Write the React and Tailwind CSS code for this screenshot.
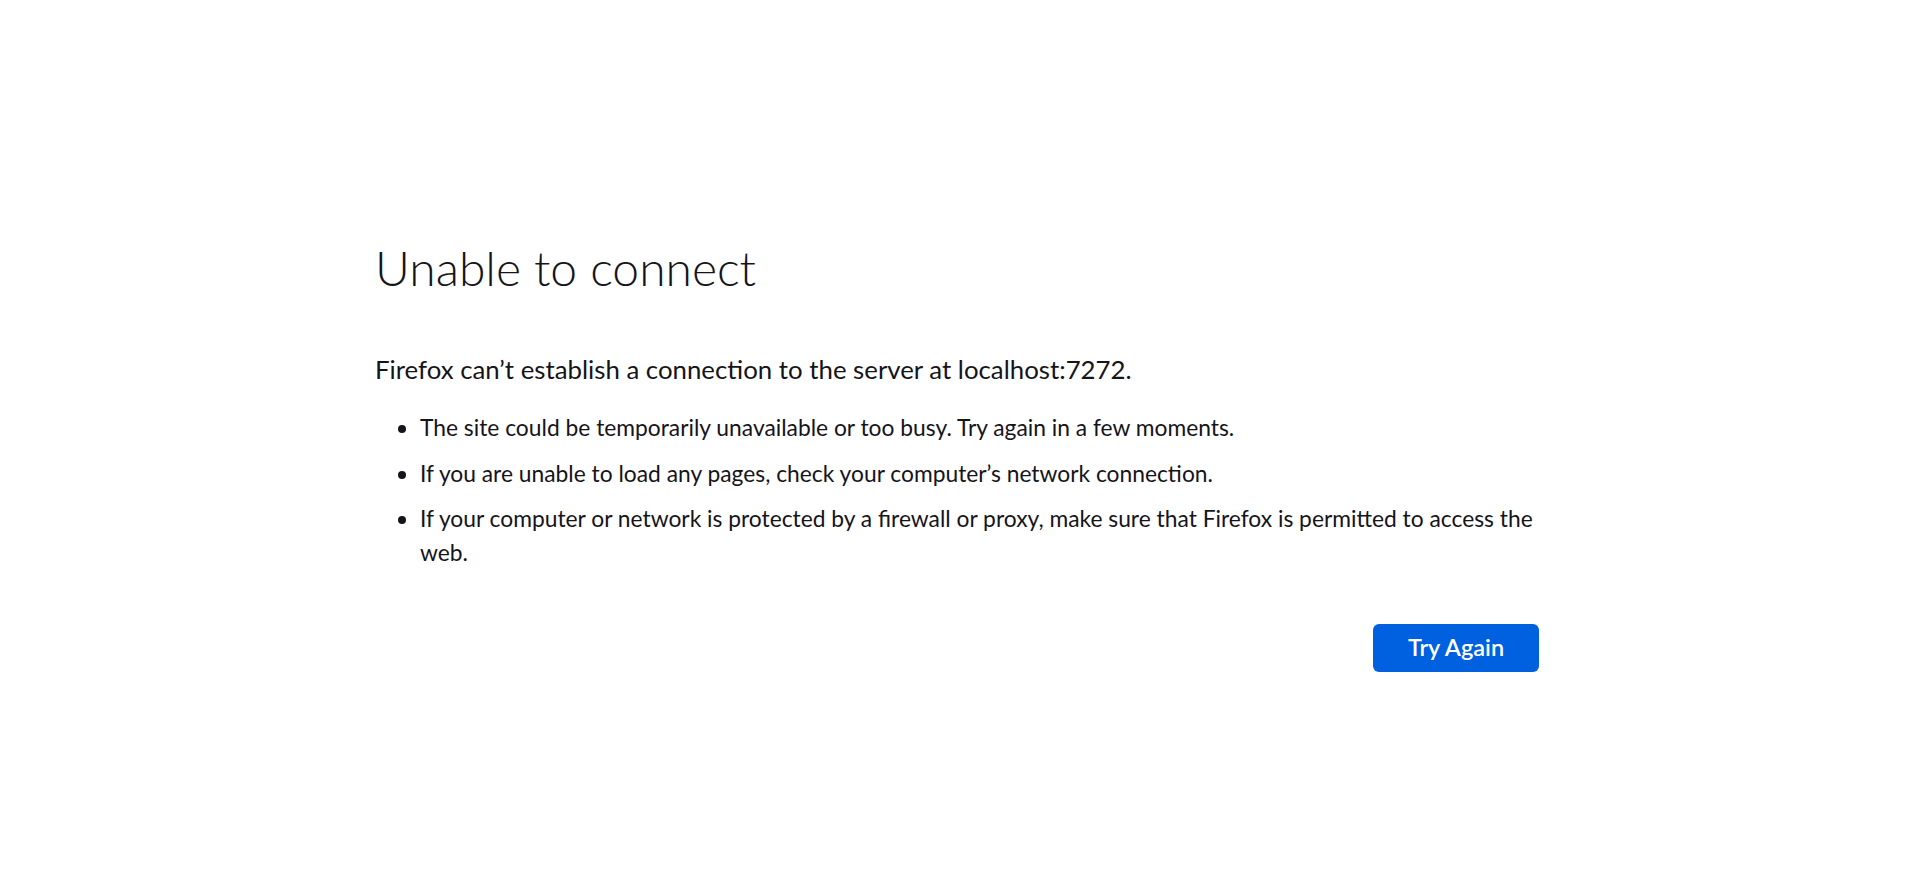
export default function App() {
  return (
    <div className="min-h-[880px] bg-white text-[#15141a] font-['Lato',sans-serif]">
      <div className="w-[1170px] mx-auto pt-[238px]">
        <h1 className="text-[48px] leading-[60px] font-light">Unable to connect</h1>
        <p className="mt-[54px] text-[25.8px] leading-[34px]">
          Firefox can’t establish a connection to the server at localhost:7272.
        </p>
        <ul className="mt-[24px] list-disc pl-[45px] text-[22.8px] leading-[34px] flex flex-col gap-[11.5px]">
          <li>The site could be temporarily unavailable or too busy. Try again in a few moments.</li>
          <li>If you are unable to load any pages, check your computer’s network connection.</li>
          <li>
            If your computer or network is protected by a firewall or proxy, make sure that Firefox is permitted to access the web.
          </li>
        </ul>
        <div className="mt-[55px] flex justify-end pr-[6px]">
          <button className="h-[48px] w-[166px] bg-[#0061e0] rounded-[6px] text-white font-semibold text-[23.5px]">
            Try Again
          </button>
        </div>
      </div>
    </div>
  );
}
